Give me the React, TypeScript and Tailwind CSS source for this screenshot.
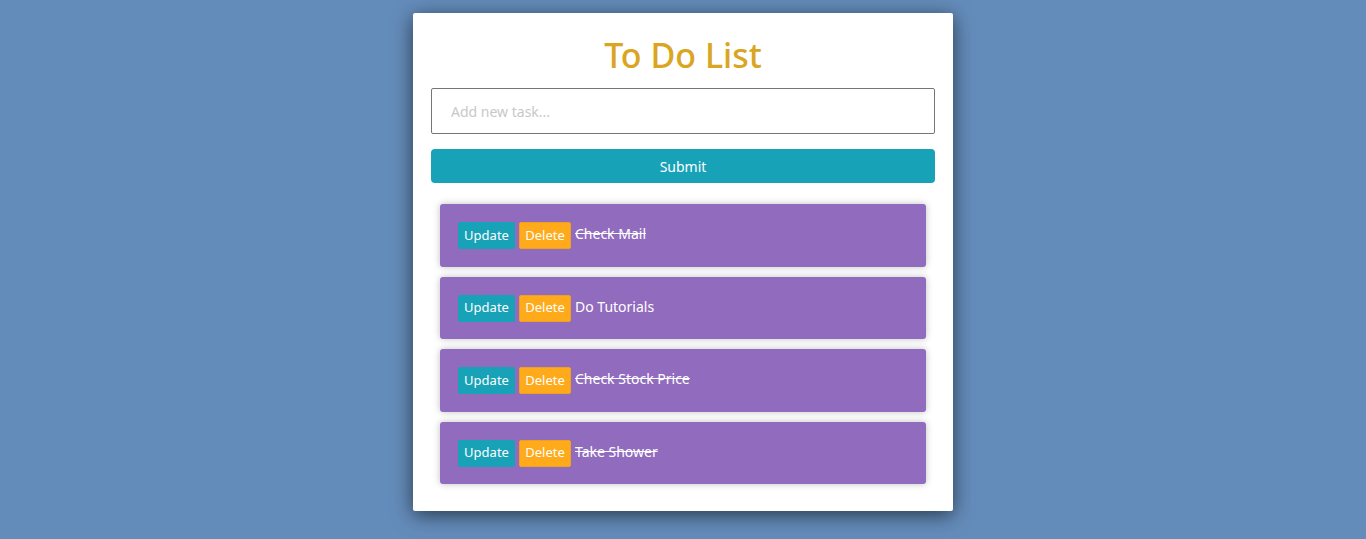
const tasks = [
  { id: 1, text: "Check Mail", done: true },
  { id: 2, text: "Do Tutorials", done: false },
  { id: 3, text: "Check Stock Price", done: true },
  { id: 4, text: "Take Shower", done: true },
];

export default function App() {
  return (
    <div
      className="min-h-[539px] w-full bg-[#648cba] pt-[13px] flex justify-center"
      style={{ fontFamily: '"Noto Sans", "Open Sans", sans-serif' }}
    >
      <div className="w-[540px] h-[498px] bg-white rounded-[2px] shadow-[0_4px_20px_rgba(0,0,0,0.6)] px-[18px]">
        <h1 className="text-center text-[34px] leading-[44px] font-medium text-[#daa520] mt-[20px] mb-[11px]">
          To Do List
        </h1>

        <input
          type="text"
          placeholder="Add new task..."
          className="block w-full h-[46px] border border-[#767676] rounded-[2px] px-[19px] text-[14px] outline-none placeholder:text-[#c8c8c8]"
        />

        <button
          type="button"
          className="mt-[15px] w-full h-[34px] rounded-[4px] bg-[#17a2b8] text-white text-[14px]"
        >
          Submit
        </button>

        <div className="mt-[21px] px-[9px] flex flex-col gap-[10px]">
          {tasks.map((task) => (
            <div
              key={task.id}
              className="h-[62.5px] bg-[#916bbe] rounded-[3px] shadow-[0_0_7px_rgba(0,0,0,0.25)] pl-[18px] pt-[18px] flex items-start"
            >
              <button
                type="button"
                className="h-[27px] w-[57px] bg-[#17a2b8] text-white text-[13px] rounded-[2px]"
              >
                Update
              </button>
              <button
                type="button"
                className="ml-[4px] h-[27px] w-[52px] bg-[#ffaa1a] border border-[#f0a020] text-white text-[13px] rounded-[2px]"
              >
                Delete
              </button>
              <span
                className={
                  task.done
                    ? "ml-[4px] text-white text-[14px] leading-[24px] line-through"
                    : "ml-[4px] text-white text-[14px] leading-[24px]"
                }
              >
                {task.text}
              </span>
            </div>
          ))}
        </div>
      </div>
    </div>
  );
}
